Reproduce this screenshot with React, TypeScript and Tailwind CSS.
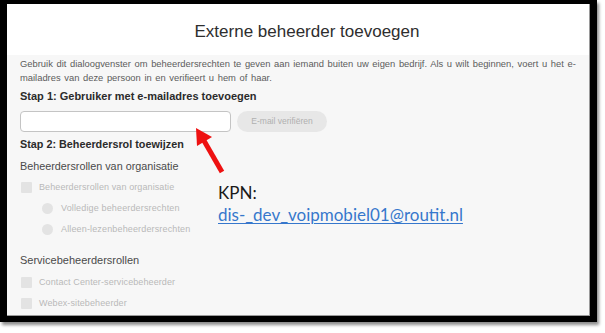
import { Fragment } from 'react'

const ui = { fontFamily: '"Liberation Sans", Arial, sans-serif' }
const note = { fontFamily: 'Lato, "Open Sans", sans-serif' }

function Check({ label }: { label: string }) {
  return (
    <div className="flex items-center h-[21px]">
      <span className="w-[11px] h-[11px] ml-[1px] bg-[#e3e3e3] rounded-[1px]" />
      <span className="ml-[7px] text-[9px] text-[#b9b9b9] tracking-[0.1px]">{label}</span>
    </div>
  )
}

function Radio({ label }: { label: string }) {
  return (
    <div className="flex items-center h-[21px] pl-[22px]">
      <span className="w-[11px] h-[11px] rounded-full bg-[#e3e3e3]" />
      <span className="ml-[8px] text-[9px] text-[#b9b9b9] tracking-[0.15px]">{label}</span>
    </div>
  )
}

export default function App() {
  const roles = ['Contact Center-servicebeheerder', 'Webex-sitebeheerder']
  return (
    <div className="relative w-[605px] h-[333px] bg-white overflow-hidden" style={ui}>
      <div className="w-[597px] h-[322px] border-l-[7px] border-t-[4px] border-r-[7px] border-b-[6px] border-black shadow-[2px_3px_3px_rgba(0,0,0,0.45)]">
        <div className="h-full flex flex-col bg-[#f7f7f7] border-r border-b border-[#9a9a9a]">
          <div className="h-[51px] bg-white flex items-center justify-center pl-[18px] pt-[5px]">
            <h1 className="text-[17px] font-medium text-[#2e2e2e]">Externe beheerder toevoegen</h1>
          </div>

          <div className="flex flex-col pl-[13px] pr-[10px]">
            <p className="mt-[2px] text-[9.4px] leading-[14px] text-[#5c5c5c] whitespace-nowrap [word-spacing:1px]">
              Gebruik dit dialoogvenster om beheerdersrechten te geven aan iemand buiten uw eigen bedrijf. Als u wilt beginnen, voert u het e-
              <br />
              mailadres van deze persoon in en verifieert u hem of haar.
            </p>

            <h2 className="mt-[4px] text-[11px] font-bold text-[#2b2b2b] leading-[14px]">
              Stap 1: Gebruiker met e-mailadres toevoegen
            </h2>

            <div className="mt-[8px] flex items-center gap-[6px]">
              <div className="w-[211px] h-[21px] bg-white border border-[#c4c4c4] rounded-[4px]" />
              <div className="w-[90px] h-[21px] rounded-full bg-[#e7e7e7] flex items-center justify-center text-[8.5px] text-[#b0b0b0]">
                E-mail verifiëren
              </div>
            </div>

            <h2 className="mt-[5px] text-[10.8px] font-bold text-[#2b2b2b] leading-[14px]">
              Stap 2: Beheerdersrol toewijzen
            </h2>
            <div className="mt-[8px] text-[10.8px] text-[#4a4a4a] leading-[14px]">
              Beheerdersrollen van organisatie
            </div>

            <div className="mt-[4px] flex flex-col">
              <Check label="Beheerdersrollen van organisatie" />
              <Radio label="Volledige beheerdersrechten" />
              <Radio label="Alleen-lezenbeheerdersrechten" />
            </div>

            <div className="mt-[13px] text-[11px] text-[#4a4a4a] leading-[14px]">
              Servicebeheerdersrollen
            </div>
            <div className="mt-[5px] flex flex-col">
              {roles.map((r) => (
                <Fragment key={r}>
                  <Check label={r} />
                </Fragment>
              ))}
            </div>
          </div>
        </div>
      </div>

      {/* annotation */}
      <svg className="absolute left-0 top-0 pointer-events-none" width="605" height="333">
        <line x1="222" y1="172" x2="203" y2="139" stroke="#ee1111" strokeWidth="5" />
        <polygon points="196,128 212,137 197,146" fill="#ee1111" />
      </svg>
      <div className="absolute left-[218px] top-[182px] text-[17px] leading-[22px] text-[#1a1a1a]" style={note}>
        <div>KPN:</div>
        <div className="text-[#3677cc] underline underline-offset-[2px] decoration-[1px]">dis-_dev_voipmobiel01@routit.nl</div>
      </div>
    </div>
  )
}
